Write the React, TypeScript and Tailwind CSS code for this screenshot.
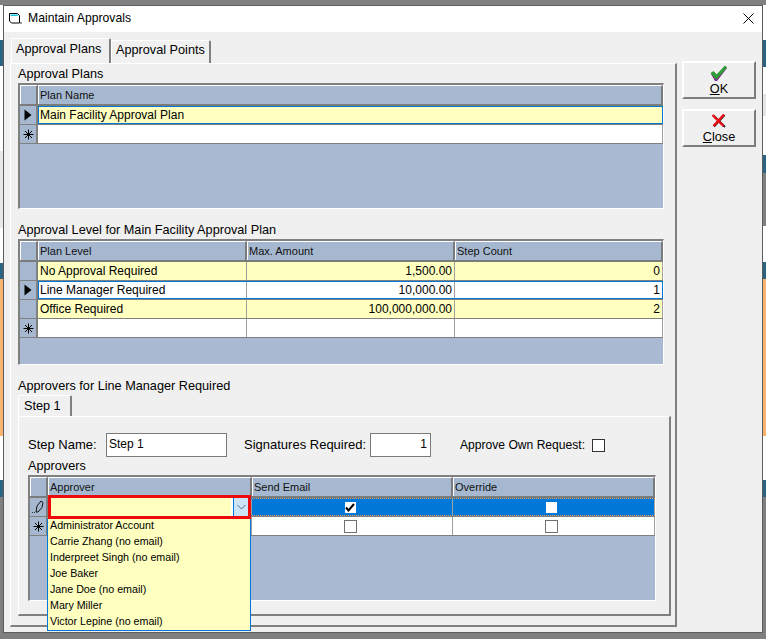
import type { FC, ReactNode } from 'react';

const FONT = "font-['Liberation_Sans',Arial,sans-serif]";

// slivers of the app behind the dialog, top to bottom
const LEFT_STRIP = [
  ['h-[35px]', 'bg-white'],
  ['h-[26px]', 'bg-[#2b6382]'],
  ['h-[85px]', 'bg-white'],
  ['h-[77px]', 'bg-[#e8e8e8]'],
  ['h-[35px]', 'bg-white'],
  ['h-[16px]', 'bg-[#2b6382]'],
  ['h-[157px]', 'bg-[#f9b46f]'],
  ['h-[44px]', 'bg-white'],
  ['h-[17px]', 'bg-[#2b6382]'],
  ['h-[136px]', 'bg-[#7f7f7f]'],
];

const RIGHT_STRIP = [
  ['h-[35px]', 'bg-white'],
  ['h-[27px]', 'bg-[#2b6382]'],
  ['h-[27px]', 'bg-white'],
  ['h-[22px]', 'bg-[#e5e5e5]'],
  ['h-[39px]', 'bg-white'],
  ['h-[18px]', 'bg-[#2b6382]'],
  ['h-[53px]', 'bg-[#7f7f7f]'],
  ['h-[36px]', 'bg-white'],
  ['h-[17px]', 'bg-[#2b6382]'],
  ['h-[157px]', 'bg-[#f9b46f]'],
  ['h-[44px]', 'bg-white'],
  ['h-[17px]', 'bg-[#2b6382]'],
  ['h-[136px]', 'bg-[#7f7f7f]'],
];

const Strip: FC<{ parts: string[][] }> = ({ parts }) => (
  <div className="flex w-[3px] shrink-0 flex-col">
    {parts.map(([h, bg], i) => (
      <div key={i} className={`${h} ${bg} shrink-0`} />
    ))}
  </div>
);

const WindowIcon = () => (
  <svg width="14" height="13" viewBox="0 0 14 13" className="shrink-0">
    <path d="M0.500 1.500h8l2 2v7.500h-8l-2-2z" fill="#fff" stroke="#000" />
    <path d="M1.500 2.500h7l1 1.500h-8z" fill="#19c3e6" />
    <path d="M11 10h2v2h-2z" fill="#999" />
  </svg>
);

const Arrow = () => (
  <svg width="8" height="12" viewBox="0 0 8 12">
    <path d="M0.500 0.500L7.500 6L0.500 11.500z" fill="#000" />
  </svg>
);

const Star = () => (
  <svg width="11" height="11" viewBox="0 0 11 11" stroke="#000" strokeWidth="1">
    <path d="M5.500 0.500v10M0.500 5.500h10M2 2l7 7M9 2l-7 7" />
  </svg>
);

const Pencil = () => (
  <svg width="14" height="14" viewBox="0 0 14 14" fill="none" stroke="#111" strokeWidth="1">
    <path d="M5 12l1-6 4-5 2 1.500-1 5-4 4.500z" />
    <path d="M1 12.500h.8M3 12.500h.8" />
  </svg>
);

const Check = () => (
  <svg width="10" height="9" viewBox="0 0 10 9" fill="none" stroke="#000" strokeWidth="2">
    <path d="M1 4.500l2.500 3L9 1" />
  </svg>
);

const GreenCheck = () => (
  <svg width="18" height="17" viewBox="0 0 18 17">
    <path d="M1 9l3-2 3 3 8-9 2 2-10 13h-2z" fill="#7a2a8a" />
    <path d="M0.500 8l3-2 3 3.500 8.500-9 2 2L7 14H5.500z" fill="#2f9e35" />
  </svg>
);

const RedCross = () => (
  <svg width="16" height="14" viewBox="0 0 16 14">
    <path d="M3 2l11 11" stroke="#222" strokeWidth="2" />
    <path d="M13.500 1L3 12.500" stroke="#222" strokeWidth="2" />
    <path d="M1.500 1l11 11M13 0.500L2.500 12" stroke="#ee0f14" strokeWidth="2.400" />
  </svg>
);

const Box: FC<{ checked?: boolean; plain?: boolean }> = ({ checked, plain }) => (
  <span
    className={`flex h-[11px] w-[11px] items-center justify-center bg-white ${
      plain ? '' : 'outline outline-1 outline-[#707070]'
    }`}
  >
    {checked ? <Check /> : null}
  </span>
);

type Column = { label: string; width: string; right?: boolean };
type Row = {
  cells: ReactNode[];
  marker?: ReactNode;
  tone?: string;
  active?: boolean;
  focus?: boolean;
};

const DataGrid: FC<{ columns: Column[]; rows: Row[]; className: string }> = ({ columns, rows, className }) => (
  <div className={`flex flex-col border-2 border-b border-r border-[#808080] border-b-white border-r-white bg-[#a9b9d2] ${className}`}>
    <div className="flex h-[21px] shrink-0 border-b-2 border-[#7b7b7b] text-[11px] leading-[19px] text-[#111]">
      <div className="w-[18px] shrink-0 border-r-2 border-l border-t border-[#ffffff] border-r-[#7b7b7b] bg-[#a5b8d0]" />
      {columns.map((col) => (
        <div
          key={col.label}
          className={`${col.width} shrink-0 border-r-2 border-t border-l border-white border-r-[#7b7b7b] bg-[#a5b8d0] pl-[1px]`}
        >
          {col.label}
        </div>
      ))}
    </div>
    {rows.map((row, i) => (
      <div key={i} className="flex h-[19px] shrink-0 border-b border-[#808080] text-[12px] leading-[17px] text-black">
        <div className="flex w-[18px] shrink-0 items-center justify-center border-r-2 border-[#808080] bg-[#a5b8d0]">
          {row.marker}
        </div>
        <div
          className={`flex min-w-0 ${row.tone ?? 'bg-white'} ${
            row.active ? 'outline outline-1 -outline-offset-1 outline-[#0078d7]' : ''
          } ${row.focus ? 'border-y border-dotted border-[#f09a4a]' : ''}`}
        >
          {columns.map((col, c) => (
            <div
              key={col.label}
              className={`${col.width} flex shrink-0 items-center border-r border-[#a0a0a0] px-[2px] ${
                col.right ? 'justify-end' : ''
              }`}
            >
              {row.cells[c]}
            </div>
          ))}
        </div>
      </div>
    ))}
  </div>
);

const YELLOW = 'bg-[#ffffc0]';

const planColumns: Column[] = [{ label: 'Plan Name', width: 'w-[625px]' }];
const levelColumns: Column[] = [
  { label: 'Plan Level', width: 'w-[209px]' },
  { label: 'Max. Amount', width: 'w-[208px]', right: true },
  { label: 'Step Count', width: 'w-[208px]', right: true },
];
const approverColumns: Column[] = [
  { label: 'Approver', width: 'w-[204px]' },
  { label: 'Send Email', width: 'w-[201px]' },
  { label: 'Override', width: 'w-[202px]' },
];

const APPROVERS = [
  'Administrator Account',
  'Carrie Zhang (no email)',
  'Inderpreet Singh (no email)',
  'Joe Baker',
  'Jane Doe (no email)',
  'Mary Miller',
  'Victor Lepine (no email)',
];

const Centered: FC<{ children: ReactNode }> = ({ children }) => (
  <div className="flex w-full justify-center pr-[4px]">{children}</div>
);

const DialogButton: FC<{ icon: ReactNode; children: ReactNode }> = ({ icon, children }) => (
  <button className="flex h-[38px] w-[74px] flex-col items-center border-2 border-white border-r-[#7d7d7d] border-b-[#7d7d7d] bg-[#f0f0f0] pt-[1px] text-[12.700px] leading-[15px] text-black">
    <span className="flex h-[18px] items-center">{icon}</span>
    <span>{children}</span>
  </button>
);

export default function App() {
  return (
    <div className={`flex h-[639px] w-[766px] flex-col overflow-hidden bg-[#7f7f7f] ${FONT}`}>
      <div className="h-[5px] shrink-0 bg-[#808080]" />
      <div className="flex h-[628px] shrink-0">
        <Strip parts={LEFT_STRIP.slice()} />
        <div className="flex w-[760px] shrink-0 flex-col border border-[#5c5c5c]">
          <div className="flex h-[26px] shrink-0 items-center bg-white pb-[2px] pl-[5px] pr-[8px] text-black">
            <WindowIcon />
            <span className="ml-[5px] flex-1 text-[12.200px]">Maintain Approvals</span>
            <svg width="11" height="11" viewBox="0 0 11 11" stroke="#000" strokeWidth="1">
              <path d="M0.500 0.500l10 10M10.500 0.500l-10 10" />
            </svg>
          </div>
          <div className="flex flex-1 bg-[#f0f0f0] pl-[6px] pt-[6px] text-[12.700px] text-black">
            <div className="flex w-[667px] shrink-0 flex-col">
              <div className="flex h-[25px] shrink-0 items-end">
                <div className="ml-[1px] h-[25px] w-[100px] rounded-t-[2px] border-l border-t border-white border-r-2 border-r-[#808080] pl-[4px] pt-[1px] leading-[18px]">
                  Approval Plans
                </div>
                <div className="h-[23px] w-[100px] rounded-t-[2px] border-l border-t border-white border-r-2 border-r-[#808080] pl-[4px] leading-[18px]">
                  Approval Points
                </div>
              </div>
              <div className="flex h-[564px] flex-col border-l border-t border-white border-r-2 border-b-2 border-r-[#808080] border-b-[#808080] pl-[7px] pt-[1px]">
                <div className="h-[18px] shrink-0 leading-[18px]">Approval Plans</div>
                <DataGrid
                  className="h-[126px] w-[646px] shrink-0"
                  columns={planColumns}
                  rows={[
                    { cells: ['Main Facility Approval Plan'], marker: <Arrow />, tone: YELLOW, active: true },
                    { cells: [''], marker: <Star /> },
                  ]}
                />
                <div className="mt-[12px] h-[18px] shrink-0 leading-[18px]">
                  Approval Level for Main Facility Approval Plan
                </div>
                <DataGrid
                  className="h-[126px] w-[646px] shrink-0"
                  columns={levelColumns}
                  rows={[
                    { cells: ['No Approval Required', '1,500.00', '0'], tone: YELLOW },
                    { cells: ['Line Manager Required', '10,000.00', '1'], marker: <Arrow />, active: true },
                    { cells: ['Office Required', '100,000,000.00', '2'], tone: YELLOW },
                    { cells: ['', '', ''], marker: <Star /> },
                  ]}
                />
                <div className="mt-[12px] h-[18px] shrink-0 leading-[18px]">Approvers for Line Manager Required</div>
                <div className="flex h-[21px] shrink-0 items-end">
                  <div className="h-[21px] w-[54px] rounded-t-[2px] border-l border-t border-white border-r-2 border-r-[#808080] pl-[5px] pt-[1px] leading-[18px]">
                    Step 1
                  </div>
                </div>
                <div className="flex h-[200px] w-[653px] shrink-0 flex-col border-l border-t border-white border-r-2 border-b-2 border-r-[#808080] border-b-[#808080] pl-[9px] pt-[16px]">
                  <div className="flex h-[24px] shrink-0 items-center text-[13px]">
                    <span className="w-[78px] shrink-0">Step Name:</span>
                    <div className="h-[24px] w-[121px] shrink-0 border border-[#7a7a7a] bg-white pl-[2px] text-[12px] leading-[20px]">
                      Step 1
                    </div>
                    <span className="ml-[17px] w-[126px] shrink-0">Signatures Required:</span>
                    <div className="h-[24px] w-[61px] shrink-0 border border-[#7a7a7a] bg-white pr-[3px] text-right text-[12px] leading-[20px]">
                      1
                    </div>
                    <span className="ml-[29px] w-[132px] shrink-0 text-[12.100px]">Approve Own Request:</span>
                    <span className="h-[13px] w-[13px] shrink-0 border border-[#333] bg-white" />
                  </div>
                  <div className="h-[18px] shrink-0 leading-[18px]">Approvers</div>
                  <div className="relative h-[126px] w-[628px] shrink-0">
                    <DataGrid
                      className="h-[126px] w-[628px]"
                      columns={approverColumns}
                      rows={[
                        {
                          cells: [
                            '',
                            <Centered key="send"><Box checked plain /></Centered>,
                            <Centered key="over"><Box plain /></Centered>,
                          ],
                          marker: <Pencil />,
                          tone: 'bg-[#0078d7]',
                          focus: true,
                        },
                        {
                          cells: [
                            '',
                            <Centered key="send"><Box /></Centered>,
                            <Centered key="over"><Box /></Centered>,
                          ],
                          marker: <Star />,
                        },
                      ]}
                    />
                    <div className="absolute left-[20px] top-[20px] flex h-[24px] w-[203px] border-[3px] border-[#ee0a0a] bg-[#ffffc0]">
                      <div className="flex-1 border-r-2 border-white" />
                      <div className="flex w-[15px] items-center justify-center border-l border-[#0078d7] bg-[#cce4f7]">
                        <svg width="9" height="6" viewBox="0 0 9 6" fill="none" stroke="#5a6a78">
                          <path d="M0.500 1l4 4 4-4" />
                        </svg>
                      </div>
                    </div>
                    <div className="absolute left-[19px] top-[44px] z-10 flex h-[112px] w-[204px] flex-col border border-t-0 border-[#0078d7] bg-[#ffffc0] pl-[2px] text-[10.700px] leading-[12px]">
                      {APPROVERS.map((name) => (
                        <div key={name} className="h-[16px] shrink-0">
                          {name}
                        </div>
                      ))}
                    </div>
                  </div>
                </div>
              </div>
            </div>
            <div className="ml-[5px] flex flex-col gap-[10px] pt-[23px]">
              <DialogButton icon={<GreenCheck />}>
                <span className="underline">O</span>K
              </DialogButton>
              <DialogButton icon={<RedCross />}>
                <span className="underline">C</span>lose
              </DialogButton>
            </div>
          </div>
        </div>
        <Strip parts={RIGHT_STRIP.slice()} />
      </div>
      <div className="flex-1 bg-[#7f7f7f]" />
    </div>
  );
}
